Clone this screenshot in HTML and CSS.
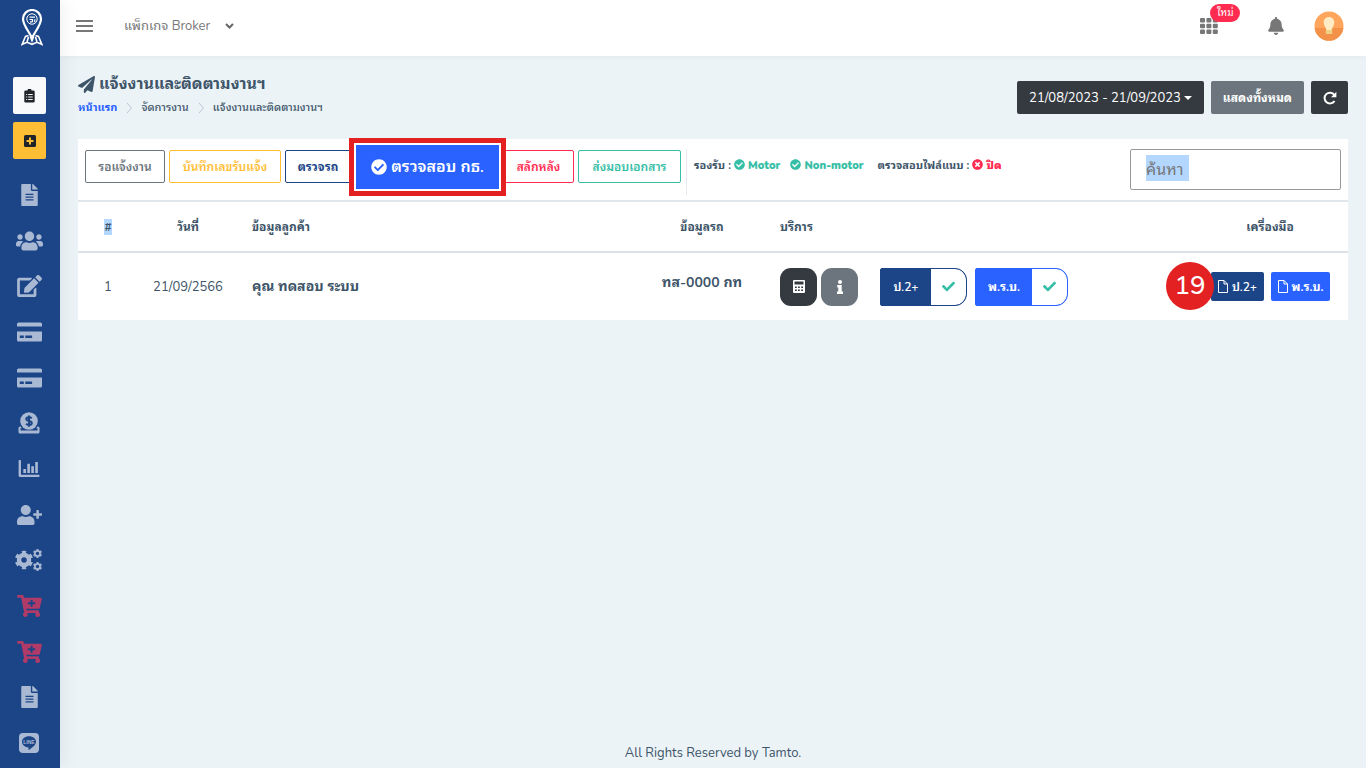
FILE: index.html
```html
<!DOCTYPE html>
<html lang="th">
<head>
<meta charset="utf-8">
<meta name="viewport" content="width=device-width, initial-scale=1">
<title>แจ้งงานและติดตามงานฯ</title>
<link rel="stylesheet" href="styles.css">
</head>
<body>
<svg class="sprite" aria-hidden="true">
  <symbol id="file" viewBox="0 0 384 512"><path d="M224 136V0H24C10.700 0 0 10.700 0 24v464c0 13.300 10.700 24 24 24h336c13.300 0 24-10.700 24-24V160H248c-13.200 0-24-10.800-24-24zm64 236c0 6.600-5.400 12-12 12H108c-6.600 0-12-5.400-12-12v-8c0-6.600 5.400-12 12-12h168c6.600 0 12 5.400 12 12v8zm0-64c0 6.600-5.400 12-12 12H108c-6.600 0-12-5.400-12-12v-8c0-6.600 5.400-12 12-12h168c6.600 0 12 5.400 12 12v8zm0-72v8c0 6.600-5.400 12-12 12H108c-6.600 0-12-5.400-12-12v-8c0-6.600 5.400-12 12-12h168c6.600 0 12 5.400 12 12zm96-114.100v6.100H256V0h6.100c6.400 0 12.500 2.500 17 7l97.900 98c4.500 4.500 7 10.600 7 16.900z"/></symbol>
  <symbol id="users" viewBox="0 0 640 512"><path d="M96 224c35.300 0 64-28.700 64-64s-28.700-64-64-64-64 28.700-64 64 28.700 64 64 64zm448 0c35.300 0 64-28.700 64-64s-28.700-64-64-64-64 28.700-64 64 28.700 64 64 64zm32 32h-64c-17.600 0-33.500 7.100-45.100 18.600 40.300 22.100 68.900 62 75.100 109.400h66c17.700 0 32-14.300 32-32v-32c0-35.300-28.700-64-64-64zm-256 0c61.900 0 112-50.100 112-112S381.900 32 320 32 208 82.100 208 144s50.100 112 112 112zm76.800 32h-8.300c-20.800 10-43.900 16-68.500 16s-47.600-6-68.500-16h-8.300C179.600 288 128 339.600 128 403.200V432c0 26.500 21.500 48 48 48h288c26.500 0 48-21.500 48-48v-28.800c0-63.600-51.600-115.200-115.200-115.200zm-223.700-13.400C161.500 263.100 145.600 256 128 256H64c-35.300 0-64 28.700-64 64v32c0 17.700 14.300 32 32 32h65.900c6.300-47.400 34.900-87.300 75.200-109.400z"/></symbol>
  <symbol id="edit" viewBox="0 0 576 512"><path d="M402.600 83.200l90.200 90.200c3.800 3.800 3.800 10 0 13.800L274.400 405.600l-92.800 10.300c-12.400 1.400-22.900-9.100-21.500-21.500l10.300-92.800L388.800 83.200c3.800-3.800 10-3.800 13.800 0zm162-22.900l-48.800-48.800c-15.200-15.200-39.900-15.200-55.200 0l-35.400 35.400c-3.800 3.800-3.800 10 0 13.800l90.200 90.200c3.800 3.800 10 3.800 13.800 0l35.400-35.400c15.200-15.300 15.200-40 0-55.200zM384 346.200V448H64V128h229.800c3.200 0 6.200-1.300 8.500-3.500l40-40c7.600-7.600 2.200-20.500-8.500-20.500H48C21.500 64 0 85.500 0 112v352c0 26.500 21.500 48 48 48h352c26.500 0 48-21.500 48-48V306.200c0-10.700-12.900-16-20.500-8.500l-40 40c-2.200 2.300-3.500 5.300-3.500 8.500z"/></symbol>
  <symbol id="card" viewBox="0 0 25 20"><path d="M1.500.500h22a1.500 1.500 0 0 1 1.500 1.500v2.500H0V2A1.500 1.500 0 0 1 1.500.500zM0 9.500h25V18a1.500 1.500 0 0 1-1.500 1.500h-22A1.500 1.500 0 0 1 0 18z"/><path class="cut" d="M2.800 13.500h4v2.500h-4zM8.300 13.500h6.800v2.500H8.300z"/></symbol>
  <symbol id="donate" viewBox="0 0 22 22"><path d="M2.500 14.500H2a1.500 1.500 0 0 0-1.500 1.500v4A1.500 1.500 0 0 0 2 21.500h18a1.500 1.500 0 0 0 1.500-1.500v-4a1.500 1.500 0 0 0-1.500-1.500h-.5l-1.300 1.800h1.300v2.200H2.500v-2.200h1.300z"/><circle cx="11" cy="9" r="8.800"/><path class="cut-line" d="M13.800 6.300c-.8-.8-1.700-1-2.800-1-1.700 0-2.700.7-2.700 1.800 0 2.800 5.500 1.200 5.500 4 0 1.200-1.100 1.900-2.800 1.900-1.200 0-2.100-.4-2.900-1.200M11 3.500v11.200"/></symbol>
  <symbol id="chart" viewBox="0 0 22 18"><path d="M0 1a1 1 0 0 1 2.500 0v14.500H21a1 1 0 0 1 0 2.500H1.200A1.200 1.200 0 0 1 0 16.800zM5 9.500h2.800v4.200H5zM9.200 4H12v9.700H9.200zM13.400 6.500h2.800v7.200h-2.800zM17.600 2h2.800v11.700h-2.800z"/></symbol>
  <symbol id="user-plus" viewBox="0 0 640 512"><path d="M624 208h-64v-64c0-8.800-7.200-16-16-16h-32c-8.800 0-16 7.200-16 16v64h-64c-8.800 0-16 7.200-16 16v32c0 8.800 7.200 16 16 16h64v64c0 8.800 7.200 16 16 16h32c8.800 0 16-7.200 16-16v-64h64c8.800 0 16-7.200 16-16v-32c0-8.800-7.200-16-16-16zm-400 48c70.700 0 128-57.300 128-128S294.700 0 224 0 96 57.300 96 128s57.300 128 128 128zm89.600 32h-16.700c-22.200 10.200-46.900 16-72.900 16s-50.600-5.800-72.900-16h-16.700C60.200 288 0 348.200 0 422.400V464c0 26.500 21.500 48 48 48h352c26.500 0 48-21.500 48-48v-41.600c0-74.200-60.200-134.400-134.400-134.400z"/></symbol>
  <symbol id="cogs" viewBox="0 0 28 22"><g class="gear"><circle cx="9" cy="11" r="5" stroke-width="4.500"/><circle cx="9" cy="11" r="7.800" stroke-width="2.800" pathLength="60" stroke-dasharray="5 5" stroke-dashoffset="-2.500"/><circle cx="22.500" cy="4.500" r="2.600" stroke-width="1.800"/><circle cx="22.500" cy="4.500" r="3.900" stroke-width="1.400" pathLength="60" stroke-dasharray="5 5" stroke-dashoffset="-2.500"/><circle cx="22.500" cy="17.500" r="2.600" stroke-width="1.800"/><circle cx="22.500" cy="17.500" r="3.900" stroke-width="1.400" pathLength="60" stroke-dasharray="5 5" stroke-dashoffset="-2.500"/></g></symbol>
  <symbol id="cart" viewBox="0 0 576 512"><path d="M504.700 320H211.600l6.500 32h268.400c15.400 0 26.800 14.300 23.400 29.300l-5.500 24.300C523.100 414.700 536 433.800 536 456c0 31.200-25.500 56.400-56.800 56-29.800-.4-54.400-24.600-55.200-54.400-.4-16.300 6.100-31 16.800-41.600H231.200C241.600 426.200 248 440.300 248 456c0 31.800-26.500 57.400-58.700 55.900-28.500-1.300-51.800-24.400-53.300-52.900-1.200-22 10.400-41.500 28.100-51.600L93.900 64H24C10.700 64 0 53.300 0 40V24C0 10.700 10.700 0 24 0h102.500c11.400 0 21.200 8 23.500 19.200L159.200 64H552c15.400 0 26.800 14.300 23.400 29.300l-47.300 208c-2.500 10.900-12.200 18.700-23.400 18.700zM408 168h-48v-40c0-8.800-7.200-16-16-16h-16c-8.800 0-16 7.200-16 16v40h-48c-8.800 0-16 7.200-16 16v16c0 8.800 7.200 16 16 16h48v40c0 8.800 7.200 16 16 16h16c8.800 0 16-7.200 16-16v-40h48c8.800 0 16-7.200 16-16v-16c0-8.800-7.200-16-16-16z"/></symbol>
  <symbol id="check-circle" viewBox="0 0 512 512"><path d="M504 256c0 137-111 248-248 248S8 393 8 256 119 8 256 8s248 111 248 248zM227.300 387.300l184-184c6.200-6.200 6.200-16.400 0-22.600l-22.600-22.600c-6.200-6.200-16.400-6.200-22.600 0L216 308.100l-70.100-70c-6.200-6.200-16.400-6.200-22.600 0l-22.600 22.600c-6.200 6.200-6.200 16.400 0 22.600l104 104c6.200 6.200 16.400 6.200 22.600 0z"/></symbol>
  <symbol id="times-circle" viewBox="0 0 512 512"><path d="M256 8C119 8 8 119 8 256s111 248 248 248 248-111 248-248S393 8 256 8zm121.600 313.100c4.700 4.700 4.700 12.300 0 17L338 377.600c-4.700 4.700-12.300 4.700-17 0L256 312l-65.100 65.600c-4.700 4.700-12.300 4.700-17 0L134.400 338c-4.700-4.700-4.700-12.300 0-17l65.600-65-65.600-65.100c-4.700-4.700-4.700-12.300 0-17l39.600-39.600c4.700-4.700 12.300-4.700 17 0l65 65.700 65.100-65.600c4.700-4.700 12.300-4.700 17 0l39.600 39.600c4.700 4.700 4.700 12.300 0 17L312 256l65.600 65.100z"/></symbol>
  <symbol id="check" viewBox="0 0 512 512"><path d="M173.900 439.400L7.500 273c-10-10-10-26.200 0-36.200l36.200-36.200c10-10 26.200-10 36.200 0L192 312.700 432.100 72.600c10-10 26.200-10 36.200 0l36.200 36.200c10 10 10 26.200 0 36.200L210.100 439.400c-10 10-26.200 10-36.200 0z"/></symbol>
  <symbol id="page" viewBox="0 0 10 13"><path class="outline" d="M.5.500h5.500l3.500 3.500v8.500h-9zM6 .5V4h3.500"/></symbol>
  <symbol id="chevron" viewBox="0 0 8 12"><path class="outline" d="M2 1l4.500 5L2 11"/></symbol>
</svg>

<div class="app">
  <aside class="sidebar">
    <a class="brand" href="#" aria-label="Tamto">
      <svg width="22" height="37" viewBox="0 0 22 37"><g fill="none" stroke="#fff"><path stroke-width="2.200" d="M11 29C8 22.500 2 16 2 10a9 9 0 0 1 18 0c0 6-6 12.500-9 19z"/><circle cx="11" cy="10" r="5.200" stroke-width="1"/><path stroke-width="1.200" d="M8.500 8.200h5.500M8.500 10.500h3v2.800M13.800 10.200v3M9 12.800h2"/><path stroke-width="1.600" d="M7.500 26.500L4.500 27.500 1.200 35.300l4.800-2 5 2 5-2 4.800 2-3.300-7.800-3-1M6 33l1.500-5M16 33l-1.500-5"/></g><path fill="#fff" d="M8.500 27.500h5L11 34z"/></svg>
    </a>
    <div class="quick">
      <a class="quick-btn quick-light" href="#" aria-label="รายการงาน"><svg width="11" height="14" viewBox="0 0 11 14"><path d="M3.500 1.500a2 2 0 0 1 4 0h2a1.200 1.200 0 0 1 1.200 1.200v9.600a1.200 1.200 0 0 1-1.200 1.200h-8a1.200 1.200 0 0 1-1.200-1.200V2.700a1.200 1.200 0 0 1 1.200-1.200z"/><path stroke="#f8f9fa" fill="none" d="M2.200 5.500h1M4.200 5.500h4.500M2.200 8h1M4.200 8h4.500M2.200 10.500h1M4.200 10.500h4.500"/></svg></a>
      <a class="quick-btn quick-gold" href="#" aria-label="เพิ่มงาน"><svg width="12" height="12" viewBox="0 0 12 12"><rect width="12" height="12" rx="1.500"/><path stroke="#ffbe34" stroke-width="2" d="M6 2.500v7M2.500 6h7"/></svg></a>
    </div>
    <nav class="menu" aria-label="เมนูหลัก">
      <a href="#" aria-label="เอกสาร"><svg width="17" height="22"><use href="#file"/></svg></a>
      <a href="#" aria-label="ลูกค้า"><svg width="27" height="22"><use href="#users"/></svg></a>
      <a href="#" aria-label="แก้ไข"><svg width="25" height="22"><use href="#edit"/></svg></a>
      <a href="#" aria-label="ชำระเงิน"><svg width="25" height="20"><use href="#card"/></svg></a>
      <a href="#" aria-label="บัตร"><svg width="25" height="20"><use href="#card"/></svg></a>
      <a href="#" aria-label="การเงิน"><svg width="22" height="22"><use href="#donate"/></svg></a>
      <a href="#" aria-label="รายงาน"><svg width="22" height="17"><use href="#chart"/></svg></a>
      <a href="#" aria-label="เพิ่มผู้ใช้"><svg width="27" height="20"><use href="#user-plus"/></svg></a>
      <a href="#" aria-label="ตั้งค่า"><svg width="28" height="22"><use href="#cogs"/></svg></a>
      <a class="shop" href="#" aria-label="ซื้อแพ็กเกจ"><svg width="25" height="22"><use href="#cart"/></svg></a>
      <a class="shop" href="#" aria-label="ซื้อเพิ่ม"><svg width="25" height="22"><use href="#cart"/></svg></a>
      <a href="#" aria-label="คู่มือ"><svg width="17" height="22"><use href="#file"/></svg></a>
      <a href="#" aria-label="LINE"><svg width="20" height="20" viewBox="0 0 20 20"><rect width="20" height="20" rx="4"/><path class="cut" d="M10 3.200c4 0 7 2.400 7 5.500 0 3.300-3.800 5.800-6.800 8-.6.400-.8.100-.7-.5l.1-1.800C5.800 14.200 3 11.700 3 8.700c0-3.100 3-5.500 7-5.500z"/><text x="10" y="10.500" text-anchor="middle" class="line-text">LINE</text></svg></a>
    </nav>
  </aside>

  <div class="page">
    <header class="topbar">
      <button class="icon-btn" type="button" aria-label="เมนู"><svg width="17" height="12" viewBox="0 0 17 12"><path stroke="#777" stroke-width="2" d="M0 1h17M0 6h17M0 11h17"/></svg></button>
      <button class="package" type="button">แพ็กเกจ Broker <svg width="9" height="6" viewBox="0 0 9 6"><path fill="none" stroke="#666" stroke-width="2" d="M1 1l3.500 3.500L8 1"/></svg></button>
      <div class="top-actions">
        <button class="icon-btn apps" type="button" aria-label="แอป"><svg width="18" height="16" viewBox="0 0 18 16"><rect width="5" height="4.500" rx="1"/><rect x="6.400" width="5" height="4.500" rx="1"/><rect x="12.800" width="5" height="4.500" rx="1"/><rect y="5.700" width="5" height="4.500" rx="1"/><rect x="6.400" y="5.700" width="5" height="4.500" rx="1"/><rect x="12.800" y="5.700" width="5" height="4.500" rx="1"/><rect y="11.400" width="5" height="4.500" rx="1"/><rect x="6.400" y="11.400" width="5" height="4.500" rx="1"/><rect x="12.800" y="11.400" width="5" height="4.500" rx="1"/></svg><span class="new">ใหม่</span></button>
        <button class="icon-btn" type="button" aria-label="การแจ้งเตือน"><svg width="16" height="18" viewBox="0 0 448 512"><path d="M224 512c35.300 0 64-28.700 64-64H160c0 35.300 28.700 64 64 64zm215.400-149.700c-19.300-20.800-55.500-52-55.500-154.300 0-77.700-54.500-139.900-127.900-155.200V32c0-17.700-14.300-32-32-32s-32 14.300-32 32v20.800C118.600 68.100 64.100 130.300 64.100 208c0 102.300-36.200 133.500-55.500 154.300-6 6.500-8.700 14.200-8.600 21.700.1 16.400 13 32 32.100 32h383.800c19.100 0 32-15.600 32.100-32 .1-7.500-2.600-15.300-8.500-21.700z"/></svg></button>
        <button class="icon-btn" type="button" aria-label="บัญชีผู้ใช้"><svg width="30" height="30" viewBox="0 0 30 30"><circle cx="15" cy="15" r="14.500" fill="#ffa55c"/><path fill="#f29147" d="M.6 17h28.800a14.500 14.500 0 0 1-28.800 0z"/><path fill="#f0d084" d="M11.800 17h6.400v6h-6.400z"/><path fill="#ffecc4" d="M15 6c3.200 0 5.300 2.400 5.300 5.500 0 3-2 5-3.200 7.500h-4.200c-1.200-2.500-3.200-4.500-3.200-7.500C9.700 8.400 11.800 6 15 6z"/></svg></button>
      </div>
    </header>

    <main class="content">
      <div class="heading">
        <div>
          <h1><svg width="17" height="17" viewBox="0 0 512 512"><path d="M476 3.200L12.500 270.600c-18.100 10.400-15.800 35.600 2.200 43.200L121 358.400l287.300-253.200c5.500-4.900 13.300 2.600 8.600 8.300L176 407v80.500c0 23.600 28.500 32.900 42.500 15.800L282 426l124.600 52.200c14.200 6 30.400-2.900 33-18.200l72-432C515 7.800 493.300-6.800 476 3.200z"/></svg>แจ้งงานและติดตามงานฯ</h1>
          <nav class="crumbs" aria-label="breadcrumb"><a href="#">หน้าแรก</a><svg width="8" height="12"><use href="#chevron"/></svg><span>จัดการงาน</span><svg width="8" height="12"><use href="#chevron"/></svg><span>แจ้งงานและติดตามงานฯ</span></nav>
        </div>
        <div class="filters">
          <button class="btn dark range" type="button">21/08/2023 - 21/09/2023 <span class="caret"></span></button>
          <button class="btn grey bold" type="button">แสดงทั้งหมด</button>
          <button class="btn dark refresh" type="button" aria-label="รีเฟรช"><svg width="14" height="14" viewBox="0 0 14 14"><path fill="none" stroke="#fff" stroke-width="2" d="M11.500 10A5.400 5.400 0 1 1 11.300 3.800"/><path fill="#fff" d="M13.400.8v5.400H8z"/></svg></button>
        </div>
      </div>

      <section class="panel">
        <div class="toolbar">
          <div class="tabs">
            <button class="tab t-wait" type="button">รอแจ้งงาน</button>
            <button class="tab t-number" type="button">บันทึกเลขรับแจ้ง</button>
            <button class="tab t-car" type="button">ตรวจรถ</button>
            <div class="slot"><button class="callout" type="button"><svg width="16" height="16"><use href="#check-circle"/></svg>ตรวจสอบ กธ.</button></div>
            <button class="tab t-endorse" type="button">สลักหลัง</button>
            <button class="tab t-deliver" type="button">ส่งมอบเอกสาร</button>
          </div>
          <div class="support">
            <span>รองรับ : <b class="ok"><svg width="11" height="11"><use href="#check-circle"/></svg> Motor</b></span>
            <b class="ok"><svg width="11" height="11"><use href="#check-circle"/></svg> Non-motor</b>
            <span class="attach">ตรวจสอบไฟล์แนบ : <b class="off"><svg width="11" height="11"><use href="#times-circle"/></svg> ปิด</b></span>
          </div>
          <input class="search" type="search" placeholder="ค้นหา" aria-label="ค้นหา">
        </div>
        <table class="jobs">
          <colgroup><col class="c-no"><col class="c-date"><col class="c-customer"><col class="c-car"><col class="c-service"><col class="c-tools"></colgroup>
          <thead><tr><th class="mid"><mark>#</mark></th><th class="mid">วันที่</th><th>ข้อมูลลูกค้า</th><th class="mid">ข้อมูลรถ</th><th>บริการ</th><th class="mid">เครื่องมือ</th></tr></thead>
          <tbody><tr>
            <td class="mid">1</td>
            <td class="mid">21/09/2566</td>
            <td class="strong">คุณ ทดสอบ ระบบ</td>
            <td class="mid strong plate">ทส-0000 กท</td>
            <td>
              <div class="services">
                <div class="rounds">
                  <button class="round dark" type="button" aria-label="คำนวณ"><svg width="12" height="13" viewBox="0 0 12 13"><path fill="#fff" fill-rule="evenodd" d="M1 0h10a1 1 0 0 1 1 1v11a1 1 0 0 1-1 1H1a1 1 0 0 1-1-1V1a1 1 0 0 1 1-1zm.5 1.500v3h9v-3zm.5 5v1.500h1.800V6.500zm3 0v1.500h1.800V6.500zm3.200 0v1.500H10V6.500zM2 9.500V11h1.800V9.500zm3 0V11h1.800V9.500zm3.200 0V11H10V9.500z"/></svg></button>
                  <button class="round grey" type="button" aria-label="ข้อมูล"><svg width="6" height="14" viewBox="0 0 6 14"><path fill="#fff" d="M1.300 5h3.400v6.500H6V14H0v-2.500h1.300v-4H.2V5z"/><circle cx="3" cy="2" r="2" fill="#fff"/></svg></button>
                </div>
                <button class="pill navy" type="button"><span>ป.2+</span><i><svg width="13" height="13"><use href="#check"/></svg></i></button>
                <button class="pill blue" type="button"><span>พ.ร.บ.</span><i><svg width="13" height="13"><use href="#check"/></svg></i></button>
              </div>
            </td>
            <td class="tools-cell">
              <div class="tools">
                <span class="step">19</span>
                <button class="tool navy" type="button"><svg width="10" height="13"><use href="#page"/></svg>ป.2+</button>
                <button class="tool blue" type="button"><svg width="10" height="13"><use href="#page"/></svg>พ.ร.บ.</button>
              </div>
            </td>
          </tr></tbody>
        </table>
      </section>
    </main>
    <footer class="foot">All Rights Reserved by Tamto.</footer>
  </div>
</div>
</body>
</html>
```
FILE: styles.css
```css
* { box-sizing: border-box; }
:root {
  --navy: #1b4587;
  --blue: #2962ff;
  --dark: #343a40;
  --grey: #6c757d;
  --green: #36bea6;
  --pink: #ff2b50;
  --gold: #ffbe34;
  --text: #3e5569;
  --red: #e32122;
}
body {
  margin: 0;
  background: #ebf3f7;
  color: var(--text);
  font: 14px/20px "Nunito", "Noto Sans", "Noto Sans Thai Looped", "Loma", "Garuda", "Noto Sans Thai", sans-serif;
}
button, input { font: inherit; }
button { border: 0; padding: 0; cursor: pointer; }
a { color: inherit; text-decoration: none; }
svg { display: block; fill: currentColor; flex: none; }
.sprite { position: absolute; width: 0; height: 0; }
.outline { fill: none; stroke: currentColor; }
.gear { fill: none; stroke: currentColor; }
.cut { fill: var(--navy); }
.cut-line { fill: none; stroke: var(--navy); stroke-width: 2; }
.line-text { font: bold 5px "Liberation Sans", sans-serif; }

.app { display: flex; min-height: 100vh; }
.sidebar {
  display: flex;
  flex-direction: column;
  width: 60px;
  height: 100vh;
  background: var(--navy);
  box-shadow: 1px 0 20px rgba(0, 0, 0, .08);
  z-index: 1;
}
.brand { display: flex; justify-content: center; padding: 9px 0 10px 4px; height: 56px; }
.quick { display: flex; flex-direction: column; gap: 8px; padding: 21px 14px 0 13px; }
.quick-btn { display: flex; align-items: center; justify-content: center; height: 37px; border-radius: 2px; color: #212529; }
.quick-light { background: #f8f9fa; }
.quick-gold { background: var(--gold); }
.menu {
  display: flex;
  flex: 1;
  flex-direction: column;
  justify-content: space-between;
  padding: 24px 2px 13px 0;
  color: #a9b8d3;
}
.menu a { display: flex; align-items: center; justify-content: center; height: 24px; }
.menu .shop { color: #b03a68; }

.page { display: flex; flex: 1; flex-direction: column; min-width: 0; }
.topbar {
  display: flex;
  align-items: center;
  height: 56px;
  padding: 0 22px 4px 16px;
  background: #fff;
  box-shadow: 0 1px 6px rgba(0, 0, 0, .04);
}
.icon-btn { display: block; background: none; color: #777; }
.package { display: flex; align-items: center; gap: 15px; margin-left: 31px; background: none; color: #777; font-size: 13px; }
.top-actions { display: flex; align-items: center; gap: 46px; margin-left: auto; }
.top-actions .icon-btn:last-child { margin-left: -16px; }
.apps { position: relative; }
.new {
  position: absolute;
  left: 10px;
  top: -14px;
  padding: 0 7px;
  border-radius: 9px;
  background: var(--pink);
  color: #fff;
  font-size: 10px;
  line-height: 18px;
}
.top-actions .icon-btn:nth-child(1) { margin-right: 4px; }

.content { flex: 1; padding: 17px 18px 0; }
.heading { display: flex; justify-content: space-between; align-items: flex-start; height: 66px; }
h1 { display: flex; align-items: center; gap: 4px; margin: 0; font-size: 16px; line-height: 22px; }
.crumbs { display: flex; align-items: center; gap: 8px; font-size: 11px; line-height: 25px; font-weight: 500; }
.crumbs a { color: var(--blue); font-weight: bold; }
.crumbs svg { color: #bcc8d2; }
.filters { display: flex; gap: 7px; padding-top: 8px; }
.btn { display: flex; align-items: center; justify-content: center; gap: 3px; height: 33px; padding: 0 12px; border-radius: 2px; color: #fff; font-size: 13px; }
.bold { font-size: 12px; font-weight: bold; }
.refresh { width: 37px; }
.dark { background: var(--dark); }
.grey { background: var(--grey); }
.navy { background: var(--navy); }
.blue { background: var(--blue); }
.caret { border: 4px solid transparent; border-top-color: #fff; border-bottom: 0; }

.panel { background: #fff; }
.toolbar { display: flex; align-items: flex-start; height: 61px; padding: 10px 7px 0; }
.tabs { display: flex; gap: 4px; padding: 1px 5px 0 0; }
.tab { height: 33px; border: 1px solid; border-radius: 2px; background: #fff; font-size: 12px; font-weight: 600; white-space: nowrap; }
.t-wait { width: 80px; color: var(--grey); }
.t-number { width: 112px; color: var(--gold); }
.t-car { width: 66px; color: var(--navy); font-weight: bold; }
.t-endorse { width: 71px; color: var(--pink); }
.t-deliver { width: 103px; color: var(--green); }
.slot { position: relative; width: 144px; }
.callout {
  position: absolute;
  inset: -12px -7px -13px -6px;
  display: flex;
  align-items: center;
  justify-content: center;
  gap: 4px;
  border: 5px solid var(--red);
  background: var(--blue);
  box-shadow: inset 0 0 0 2px #fff;
  color: #fff;
  font-size: 16px;
  font-weight: 600;
  white-space: nowrap;
}
.support { display: flex; gap: 10px; height: 46px; padding: 7px 0 0 7px; border-left: 1px solid #e6eaee; font-size: 11px; font-weight: bold; white-space: nowrap; }
.support svg { display: inline-block; vertical-align: -1px; }
.attach { margin-left: 4px; }
.ok { color: var(--green); }
.off { color: var(--pink); }
.search { width: 211px; height: 41px; margin-left: auto; padding: 0 15px; border: 1px solid #999; border-radius: 2px; background: #fff; font-size: 16px; line-height: 24px; }
.search::placeholder { color: #757575; opacity: 1; background: linear-gradient(#b3d7ff, #b3d7ff) 0 0 / 43px 100% no-repeat; }

.jobs { width: 100%; border-collapse: collapse; table-layout: fixed; }
.c-no { width: 60px; }
.c-date { width: 100px; }
.c-customer { width: 400px; }
.c-car { width: 128px; }
.c-tools { width: 156px; }
.jobs th { height: 51px; padding: 0 14px; border-top: 2px solid #e1e6ea; border-bottom: 2px solid #dee2e6; text-align: left; font-size: 12px; }
.jobs td { height: 68px; padding: 0 14px; font-size: 13px; }
.jobs .mid { padding: 0; text-align: center; }
.jobs .strong { font-size: 14px; font-weight: bold; }
.jobs .plate { padding-bottom: 8px; }
mark { background: #b3d7ff; color: inherit; }
.services { display: flex; gap: 8px; }
.rounds { display: flex; gap: 4px; margin-right: 14px; }
.round { display: flex; align-items: center; justify-content: center; width: 37px; height: 38px; border-radius: 11px; }
.pill { display: flex; height: 38px; border-radius: 2px 12px 12px 2px; color: #fff; font-size: 12px; font-weight: 600; overflow: hidden; }
.pill.navy { border: 1px solid var(--navy); }
.pill.blue { border: 1px solid var(--blue); font-weight: bold; }
.pill span { padding: 8px 0; width: 50px; }
.pill.blue span { width: 56px; }
.pill i { display: flex; align-items: center; justify-content: center; width: 35px; height: 36px; border-radius: 0 11px 11px 0; background: #fff; color: var(--green); }
.jobs .tools-cell { padding: 0 18px 0 0; }
.tools { position: relative; display: flex; justify-content: flex-end; gap: 7px; }
.tool { display: flex; align-items: center; justify-content: center; gap: 4px; width: 53px; height: 29px; border-radius: 2px; color: #fff; font-size: 12px; font-weight: 600; white-space: nowrap; }
.tool.blue { width: 59px; font-weight: bold; }
.step { position: absolute; right: 116px; top: -10px; width: 48px; height: 48px; border-radius: 50%; background: var(--red); color: #fff; font-size: 26px; font-weight: 500; line-height: 48px; text-align: center; }
.foot { padding: 0 0 5px; text-align: center; font-size: 13px; }
```
